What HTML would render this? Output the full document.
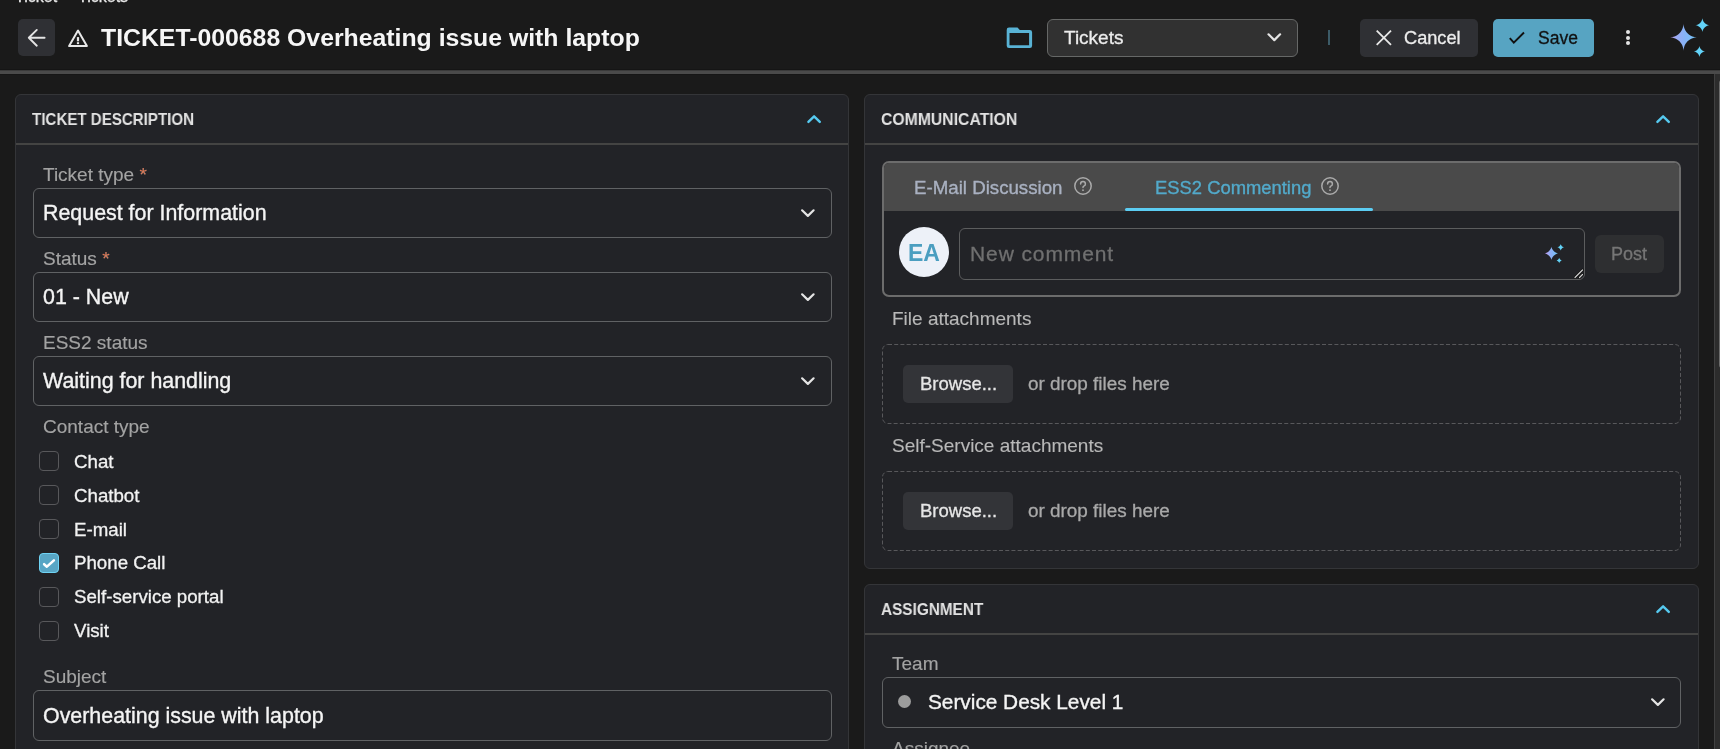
<!DOCTYPE html>
<html><head><meta charset="utf-8">
<style>
*{box-sizing:border-box;margin:0;padding:0}
html,body{width:1720px;height:749px;overflow:hidden;background:#1a1a1a;font-family:"Liberation Sans",sans-serif;color:#f2f2f2}
.a{position:absolute}
.t{position:absolute;white-space:nowrap;line-height:1;will-change:transform}
.panel{position:absolute;background:#222327;border:1px solid #343538;border-radius:6px}
.phdr{position:absolute;left:0;right:0;top:48px;height:2px;background:#444443}
.sec{font-weight:700;font-size:17px;color:#e2e2e2;transform:scaleX(0.89);transform-origin:0 0}
.lbl{font-size:19px;color:#a3a3a3;-webkit-text-stroke:0.15px #a3a3a3}
.inp{position:absolute;border:1.5px solid #606264;border-radius:6px;background:#222327}
.val{font-size:21.4px;color:#f4f4f4;-webkit-text-stroke:0.35px #f4f4f4}
.cb{position:absolute;width:20px;height:20px;border:1.5px solid #58585b;border-radius:4px}
.cbl{font-size:18.7px;color:#f2f2f2;-webkit-text-stroke:0.3px #f2f2f2}
.btn{position:absolute;border-radius:5px}
</style></head>
<body>
<!-- breadcrumb cut off -->
<div class="t" style="left:14.5px;top:-11px;font-size:16px;color:#e8e8e8;-webkit-text-stroke:0.3px #e8e8e8">Ticket</div><div class="t" style="left:77.8px;top:-11px;font-size:16px;color:#e8e8e8;-webkit-text-stroke:0.3px #e8e8e8">Tickets</div>

<!-- header -->
<div class="btn" style="left:18px;top:19px;width:37px;height:37px;background:#2f3034"></div>
<svg class="a" style="left:18px;top:19px" width="37" height="37" viewBox="0 0 37 37"><path d="M26.6 18.8H10.8M18.8 10.9L10.8 18.8L18.8 26.7" fill="none" stroke="#e4e4e4" stroke-width="1.9" stroke-linecap="round" stroke-linejoin="round"/></svg>
<svg class="a" style="left:66px;top:27px" width="24" height="22" viewBox="0 0 24 22"><path d="M12 3.6L3.1 19.1H20.9Z" fill="none" stroke="#e8e8e8" stroke-width="2" stroke-linejoin="round"/><rect x="10.9" y="10.1" width="2.2" height="4.2" fill="#e8e8e8"/><rect x="10.9" y="15.2" width="2.2" height="1.9" fill="#e8e8e8"/></svg>
<div class="t" style="left:101px;top:26px;font-size:24.8px;font-weight:700;color:#f6f6f6">TICKET-000688 Overheating issue with laptop</div>

<svg class="a" style="left:1006px;top:27px" width="28" height="23" viewBox="0 0 28 23"><path fill-rule="evenodd" fill="#59b3d5" d="M0.7 3Q0.7 0.6 3 0.6H11.5L13.8 3H23.8Q26.1 3 26.1 5.3V18.7Q26.1 21 23.8 21H3Q0.7 21 0.7 18.7ZM3.5 6V18.2H23.1V6Z"/></svg>
<div class="inp" style="left:1047px;top:19px;width:251px;height:38px;background:#313131;border:1px solid #666867;border-radius:6px"></div>
<div class="t" style="left:1064px;top:28px;font-size:19px;color:#ececec;-webkit-text-stroke:0.3px #ececec">Tickets</div>
<svg class="a" style="left:1264px;top:30px" width="20" height="14" viewBox="0 0 20 14"><path d="M4.5 4.3L10.3 10.1L16.1 4.3" fill="none" stroke="#e4e4e4" stroke-width="2.2" stroke-linecap="round" stroke-linejoin="round"/></svg>
<div class="a" style="left:1328px;top:30px;width:2px;height:15px;background:#3c5b67"></div>

<div class="btn" style="left:1360px;top:19px;width:118px;height:38px;background:#2f3034"></div>
<svg class="a" style="left:1372px;top:26px" width="24" height="24" viewBox="0 0 24 24"><path d="M4.7 4.7L19 18.9M19 4.7L4.7 18.9" fill="none" stroke="#e8e8e8" stroke-width="1.8"/></svg>
<div class="t" style="left:1404px;top:29px;font-size:18.2px;color:#ececec;-webkit-text-stroke:0.3px #ececec">Cancel</div>

<div class="btn" style="left:1493px;top:19px;width:101px;height:38px;background:#57a4c2"></div>
<svg class="a" style="left:1505px;top:26px" width="24" height="24" viewBox="0 0 24 24"><path d="M4.8 12.2L8.8 16.6L19 6.5" fill="none" stroke="#111" stroke-width="1.9"/></svg>
<div class="t" style="left:1538px;top:30px;font-size:17.5px;color:#111;-webkit-text-stroke:0.3px #111">Save</div>

<div class="a" style="left:1626px;top:30px;width:4px;height:4px;border-radius:50%;background:#e4e4e4"></div>
<div class="a" style="left:1626px;top:35.7px;width:4px;height:4px;border-radius:50%;background:#e4e4e4"></div>
<div class="a" style="left:1626px;top:41.4px;width:4px;height:4px;border-radius:50%;background:#e4e4e4"></div>

<svg class="a" style="left:1664px;top:14px" width="56" height="48" viewBox="0 0 56 48">
<defs><linearGradient id="sg" gradientUnits="userSpaceOnUse" x1="5.6" y1="0" x2="33.4" y2="0"><stop offset="0" stop-color="#cc9af0"/><stop offset="0.22" stop-color="#9eaaf5"/><stop offset="0.55" stop-color="#86b3f6"/><stop offset="1" stop-color="#72c6f6"/></linearGradient></defs>
<path fill="url(#sg)" d="M33.40 23.30L33.21 23.30L32.66 23.27L31.78 23.19L30.63 23.00L29.28 22.66L27.82 22.13L26.32 21.39L24.87 20.43L23.53 19.27L22.37 17.93L21.41 16.48L20.67 14.98L20.14 13.52L19.80 12.17L19.61 11.02L19.53 10.14L19.50 9.59L19.50 9.40L19.50 9.59L19.47 10.14L19.39 11.02L19.20 12.17L18.86 13.52L18.33 14.98L17.59 16.48L16.63 17.93L15.47 19.27L14.13 20.43L12.68 21.39L11.18 22.13L9.72 22.66L8.37 23.00L7.22 23.19L6.34 23.27L5.79 23.30L5.60 23.30L5.79 23.30L6.34 23.33L7.22 23.41L8.37 23.60L9.72 23.94L11.18 24.47L12.68 25.21L14.13 26.17L15.47 27.33L16.63 28.67L17.59 30.12L18.33 31.62L18.86 33.08L19.20 34.43L19.39 35.58L19.47 36.46L19.50 37.01L19.50 37.20L19.50 37.01L19.53 36.46L19.61 35.58L19.80 34.43L20.14 33.08L20.67 31.62L21.41 30.12L22.37 28.67L23.53 27.33L24.87 26.17L26.32 25.21L27.82 24.47L29.28 23.94L30.63 23.60L31.78 23.41L32.66 23.33L33.21 23.30Z"/>
<path fill="#63d3f8" d="M45.60 11.20L45.31 11.19L44.49 11.06L43.30 10.68L41.95 9.98L40.67 8.93L39.62 7.65L38.92 6.30L38.54 5.11L38.41 4.29L38.40 4.00L38.39 4.29L38.26 5.11L37.88 6.30L37.18 7.65L36.13 8.93L34.85 9.98L33.50 10.68L32.31 11.06L31.49 11.19L31.20 11.20L31.49 11.21L32.31 11.34L33.50 11.72L34.85 12.42L36.13 13.47L37.18 14.75L37.88 16.10L38.26 17.29L38.39 18.11L38.40 18.40L38.41 18.11L38.54 17.29L38.92 16.10L39.62 14.75L40.67 13.47L41.95 12.42L43.30 11.72L44.49 11.34L45.31 11.21Z"/>
<path fill="#63d3f8" d="M41.30 37.40L41.06 37.39L40.39 37.28L39.42 36.98L38.31 36.40L37.26 35.54L36.40 34.49L35.82 33.38L35.52 32.41L35.41 31.74L35.40 31.50L35.39 31.74L35.28 32.41L34.98 33.38L34.40 34.49L33.54 35.54L32.49 36.40L31.38 36.98L30.41 37.28L29.74 37.39L29.50 37.40L29.74 37.41L30.41 37.52L31.38 37.82L32.49 38.40L33.54 39.26L34.40 40.31L34.98 41.42L35.28 42.39L35.39 43.06L35.40 43.30L35.41 43.06L35.52 42.39L35.82 41.42L36.40 40.31L37.26 39.26L38.31 38.40L39.42 37.82L40.39 37.52L41.06 37.41Z"/>
</svg>

<div class="a" style="left:0;top:69px;width:1720px;height:1px;background:#151515"></div><div class="a" style="left:0;top:70px;width:1720px;height:1px;background:#3a3a3a"></div><div class="a" style="left:0;top:71px;width:1720px;height:3px;background:#4a4a4a"></div><div class="a" style="left:0;top:74px;width:1714px;height:1px;background:#161616"></div>
<!-- scrollbar -->
<div class="a" style="left:1714px;top:74px;width:1px;height:675px;background:#404040"></div>
<div class="a" style="left:1715px;top:74px;width:5px;height:675px;background:#2c2c2c"></div>
<div class="a" style="left:1718.5px;top:80px;width:6px;height:288px;border-radius:3px;background:#6c6c6c"></div>

<!-- LEFT PANEL -->
<div class="panel" style="left:15px;top:94px;width:834px;height:700px">
  <div class="phdr"></div>
</div>
<div class="t sec" style="left:32px;top:111px;transform:scaleX(0.889)">TICKET DESCRIPTION</div>
<svg class="a" style="left:804px;top:109px" width="20" height="20" viewBox="0 0 20 20"><path d="M4.4 12.9L10.1 7.3L15.8 12.9" fill="none" stroke="#56c9ef" stroke-width="2.4" stroke-linecap="round" stroke-linejoin="round"/></svg>

<div class="t lbl" style="left:43px;top:165px">Ticket type <span style="color:#e8764f">*</span></div>
<div class="inp" style="left:33px;top:188px;width:799px;height:50px"></div>
<div class="t val" style="left:43px;top:203px">Request for Information</div>
<svg class="a" style="left:798px;top:203px" width="20" height="20" viewBox="0 0 20 20"><path d="M4.1 7.3L9.85 12.9L15.6 7.3" fill="none" stroke="#e4e4e4" stroke-width="2.2" stroke-linecap="round" stroke-linejoin="round"/></svg>

<div class="t lbl" style="left:43px;top:249px">Status <span style="color:#e8764f">*</span></div>
<div class="inp" style="left:33px;top:272px;width:799px;height:50px"></div>
<div class="t val" style="left:43px;top:287px">01 - New</div>
<svg class="a" style="left:798px;top:287px" width="20" height="20" viewBox="0 0 20 20"><path d="M4.1 7.3L9.85 12.9L15.6 7.3" fill="none" stroke="#e4e4e4" stroke-width="2.2" stroke-linecap="round" stroke-linejoin="round"/></svg>

<div class="t lbl" style="left:43px;top:333px">ESS2 status</div>
<div class="inp" style="left:33px;top:356px;width:799px;height:50px"></div>
<div class="t val" style="left:43px;top:371px">Waiting for handling</div>
<svg class="a" style="left:798px;top:371px" width="20" height="20" viewBox="0 0 20 20"><path d="M4.1 7.3L9.85 12.9L15.6 7.3" fill="none" stroke="#e4e4e4" stroke-width="2.2" stroke-linecap="round" stroke-linejoin="round"/></svg>

<div class="t lbl" style="left:43px;top:417px">Contact type</div>
<div class="cb" style="left:39px;top:451px"></div><div class="t cbl" style="left:74px;top:453px">Chat</div>
<div class="cb" style="left:39px;top:485px"></div><div class="t cbl" style="left:74px;top:487px">Chatbot</div>
<div class="cb" style="left:39px;top:519px"></div><div class="t cbl" style="left:74px;top:521px">E-mail</div>
<div class="cb" style="left:39px;top:553px;background:#58a6c5;border-color:#6fd3f4"></div>
<svg class="a" style="left:39px;top:553px" width="20" height="20" viewBox="0 0 20 20"><path d="M5.1 11.2L7.9 13.7L14.9 7.3" fill="none" stroke="#fff" stroke-width="2.5" stroke-linecap="round" stroke-linejoin="round"/></svg>
<div class="t cbl" style="left:74px;top:554px">Phone Call</div>
<div class="cb" style="left:39px;top:587px"></div><div class="t cbl" style="left:74px;top:588px">Self-service portal</div>
<div class="cb" style="left:39px;top:621px"></div><div class="t cbl" style="left:74px;top:622px">Visit</div>

<div class="t lbl" style="left:43px;top:667px">Subject</div>
<div class="inp" style="left:33px;top:690px;width:799px;height:51px"></div>
<div class="t val" style="left:43px;top:706px">Overheating issue with laptop</div>

<!-- RIGHT PANEL: COMMUNICATION -->
<div class="panel" style="left:864px;top:94px;width:835px;height:475px">
  <div class="phdr"></div>
</div>
<div class="t sec" style="left:881px;top:111px;transform:scaleX(0.927)">COMMUNICATION</div>
<svg class="a" style="left:1653px;top:109px" width="20" height="20" viewBox="0 0 20 20"><path d="M4.4 12.9L10.1 7.3L15.8 12.9" fill="none" stroke="#56c9ef" stroke-width="2.4" stroke-linecap="round" stroke-linejoin="round"/></svg>

<div class="a" style="left:882px;top:161px;width:799px;height:136px;border:2px solid #6c6c6c;border-radius:7px;background:#222327;overflow:hidden">
  <div class="a" style="left:0;top:0;width:795px;height:48px;background:#4a4a4a"></div>
</div>
<div class="t" style="left:914px;top:179px;font-size:18.7px;color:#a9b1c1;-webkit-text-stroke:0.35px #a9b1c1">E-Mail Discussion</div>
<svg class="a" style="left:1073px;top:176px" width="20" height="20" viewBox="0 0 20 20"><circle cx="10" cy="10" r="8.2" fill="none" stroke="#aaaaaa" stroke-width="1.5"/><path d="M7.6 8.1Q7.6 5.6 10 5.6Q12.4 5.6 12.4 7.9Q12.4 9.4 10.8 10.1Q10 10.5 10 11.6" fill="none" stroke="#aaaaaa" stroke-width="1.5" stroke-linecap="round"/><circle cx="10" cy="14.2" r="0.9" fill="#aaaaaa"/></svg>
<div class="t" style="left:1155px;top:179px;font-size:18.4px;color:#52aacb;-webkit-text-stroke:0.35px #52aacb">ESS2 Commenting</div>
<svg class="a" style="left:1320px;top:176px" width="20" height="20" viewBox="0 0 20 20"><circle cx="10" cy="10" r="8.2" fill="none" stroke="#aaaaaa" stroke-width="1.5"/><path d="M7.6 8.1Q7.6 5.6 10 5.6Q12.4 5.6 12.4 7.9Q12.4 9.4 10.8 10.1Q10 10.5 10 11.6" fill="none" stroke="#aaaaaa" stroke-width="1.5" stroke-linecap="round"/><circle cx="10" cy="14.2" r="0.9" fill="#aaaaaa"/></svg>
<div class="a" style="left:1125px;top:208px;width:248px;height:3px;border-radius:2px;background:#5ccdf3"></div>

<div class="a" style="left:899px;top:227px;width:50px;height:50px;border-radius:50%;background:#edf1f8"></div>
<div class="t" style="left:899px;top:242px;width:50px;text-align:center;font-size:23px;font-weight:700;color:#4b9ec0">EA</div>
<div class="inp" style="left:959px;top:228px;width:626px;height:52px;border-color:#5c5d5e"></div>
<div class="t" style="left:970px;top:243px;font-size:21px;letter-spacing:0.9px;color:#707070;-webkit-text-stroke:0.3px #707070">New comment</div>
<svg class="a" style="left:1535px;top:235px" width="40" height="40" viewBox="0 0 40 40">
<defs><linearGradient id="sg2" gradientUnits="userSpaceOnUse" x1="9.7" y1="0" x2="23.1" y2="0"><stop offset="0" stop-color="#cf9cf2"/><stop offset="0.35" stop-color="#96adf6"/><stop offset="0.7" stop-color="#7fb8f6"/><stop offset="1" stop-color="#70cbf6"/></linearGradient></defs>
<path fill="url(#sg2)" d="M23.20 18.40L23.02 18.39L22.51 18.29L21.73 18.05L20.77 17.59L19.74 16.92L18.74 16.06L17.88 15.06L17.21 14.03L16.75 13.07L16.51 12.29L16.41 11.78L16.40 11.60L16.39 11.78L16.29 12.29L16.05 13.07L15.59 14.03L14.92 15.06L14.06 16.06L13.06 16.92L12.03 17.59L11.07 18.05L10.29 18.29L9.78 18.39L9.60 18.40L9.78 18.41L10.29 18.51L11.07 18.75L12.03 19.21L13.06 19.88L14.06 20.74L14.92 21.74L15.59 22.77L16.05 23.73L16.29 24.51L16.39 25.02L16.40 25.20L16.41 25.02L16.51 24.51L16.75 23.73L17.21 22.77L17.88 21.74L18.74 20.74L19.74 19.88L20.77 19.21L21.73 18.75L22.51 18.51L23.02 18.41Z"/>
<path fill="#63d3f8" d="M29.10 12.30L28.90 12.28L28.36 12.12L27.63 11.74L26.87 11.13L26.26 10.37L25.88 9.64L25.72 9.10L25.70 8.90L25.68 9.10L25.52 9.64L25.14 10.37L24.53 11.13L23.77 11.74L23.04 12.12L22.50 12.28L22.30 12.30L22.50 12.32L23.04 12.48L23.77 12.86L24.53 13.47L25.14 14.23L25.52 14.96L25.68 15.50L25.70 15.70L25.72 15.50L25.88 14.96L26.26 14.23L26.87 13.47L27.63 12.86L28.36 12.48L28.90 12.32Z"/>
<path fill="#63d3f8" d="M27.10 25.40L26.93 25.38L26.47 25.25L25.84 24.92L25.20 24.40L24.68 23.76L24.35 23.13L24.22 22.67L24.20 22.50L24.18 22.67L24.05 23.13L23.72 23.76L23.20 24.40L22.56 24.92L21.93 25.25L21.47 25.38L21.30 25.40L21.47 25.42L21.93 25.55L22.56 25.88L23.20 26.40L23.72 27.04L24.05 27.67L24.18 28.13L24.20 28.30L24.22 28.13L24.35 27.67L24.68 27.04L25.20 26.40L25.84 25.88L26.47 25.55L26.93 25.42Z"/>
</svg>
<svg class="a" style="left:1572px;top:267px" width="14" height="14" viewBox="0 0 14 14"><path d="M3 10.5L10.5 3M7.5 10.5L10.5 7.5" stroke="#111" stroke-width="2.6" stroke-linecap="round"/><path d="M3 10.5L10.5 3M7.5 10.5L10.5 7.5" stroke="#cfcfcf" stroke-width="1.2" stroke-linecap="round"/></svg>
<div class="btn" style="left:1595px;top:235px;width:69px;height:38px;background:#2e2f31;border-radius:6px"></div>
<div class="t" style="left:1611px;top:245px;font-size:18px;color:#767676;-webkit-text-stroke:0.3px #767676">Post</div>

<div class="t lbl" style="left:892px;top:309px;color:#b9b9b9">File attachments</div>
<svg class="a" style="left:882px;top:344px" width="799" height="80"><rect x="0.5" y="0.5" width="798" height="79" rx="5.5" fill="none" stroke="#58585b" stroke-width="1" stroke-dasharray="4 2.2"/></svg>
<div class="btn" style="left:903px;top:365px;width:110px;height:38px;background:#333438;border-radius:5px"></div>
<div class="t" style="left:920px;top:375px;font-size:18.5px;color:#e6e6e6;-webkit-text-stroke:0.3px #e6e6e6">Browse...</div>
<div class="t" style="left:1028px;top:375px;font-size:18.9px;color:#a9a9a9;-webkit-text-stroke:0.3px #a9a9a9">or drop files here</div>

<div class="t lbl" style="left:892px;top:436px;color:#b9b9b9">Self-Service attachments</div>
<svg class="a" style="left:882px;top:471px" width="799" height="80"><rect x="0.5" y="0.5" width="798" height="79" rx="5.5" fill="none" stroke="#58585b" stroke-width="1" stroke-dasharray="4 2.2"/></svg>
<div class="btn" style="left:903px;top:492px;width:110px;height:38px;background:#333438;border-radius:5px"></div>
<div class="t" style="left:920px;top:502px;font-size:18.5px;color:#e6e6e6;-webkit-text-stroke:0.3px #e6e6e6">Browse...</div>
<div class="t" style="left:1028px;top:502px;font-size:18.9px;color:#a9a9a9;-webkit-text-stroke:0.3px #a9a9a9">or drop files here</div>

<!-- ASSIGNMENT -->
<div class="panel" style="left:864px;top:584px;width:835px;height:300px">
  <div class="phdr"></div>
</div>
<div class="t sec" style="left:881px;top:601px;transform:scaleX(0.902)">ASSIGNMENT</div>
<svg class="a" style="left:1653px;top:599px" width="20" height="20" viewBox="0 0 20 20"><path d="M4.4 12.9L10.1 7.3L15.8 12.9" fill="none" stroke="#56c9ef" stroke-width="2.4" stroke-linecap="round" stroke-linejoin="round"/></svg>
<div class="t lbl" style="left:892px;top:654px">Team</div>
<div class="inp" style="left:882px;top:677px;width:799px;height:51px"></div>
<div class="a" style="left:898px;top:695px;width:13px;height:13px;border-radius:50%;background:#9c9c9c"></div>
<div class="t val" style="left:928px;top:692px;font-size:20.8px">Service Desk Level 1</div>
<svg class="a" style="left:1648px;top:692px" width="20" height="20" viewBox="0 0 20 20"><path d="M4.1 7.3L9.85 12.9L15.6 7.3" fill="none" stroke="#e4e4e4" stroke-width="2.2" stroke-linecap="round" stroke-linejoin="round"/></svg>
<div class="t lbl" style="left:892px;top:739px">Assignee</div>
</body></html>
